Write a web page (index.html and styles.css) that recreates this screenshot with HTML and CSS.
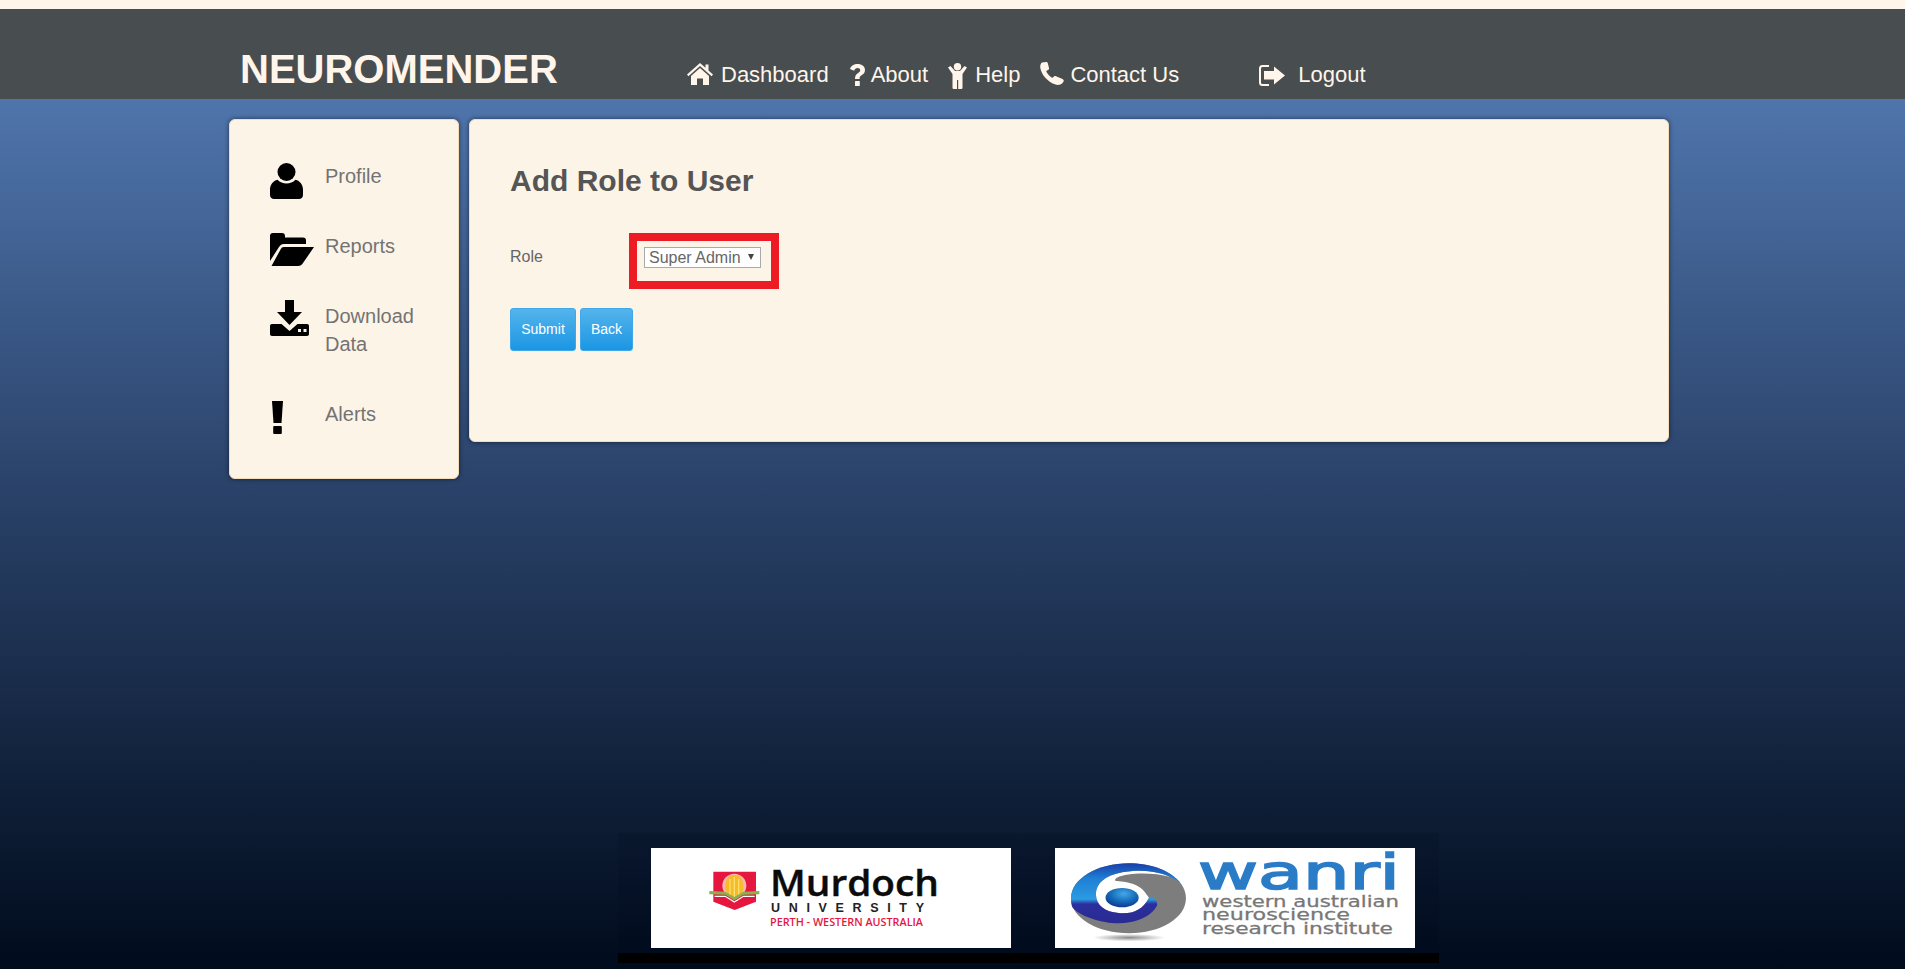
FILE: index.html
```html
<!DOCTYPE html>
<html lang="en">
<head>
<meta charset="utf-8">
<title>Neuromender</title>
<link rel="stylesheet" href="styles.css">
</head>
<body>
<header class="topbar">
  <h1 class="brand">NEUROMENDER</h1>
  <nav class="nav">
    <a class="nav-item nav-dashboard" href="#">
      <svg class="nav-icon icon-home" viewBox="0 0 26 22"><path d="M13 0 L18.500 4.800 V1.500 H21.500 V7.500 L26 11.500 L24.600 13.200 L13 3 L1.400 13.200 L0 11.500 Z"/><path d="M13 5 L22 13 V22 H16 V15.500 H10 V22 H4 V13 Z"/></svg>Dashboard</a>
    <a class="nav-item nav-about" href="#">
      <svg class="nav-icon icon-question" viewBox="0 0 15 22"><path d="M0 5 C1 1.500 4 0 7.500 0 C12 0 15 2.400 15 6 C15 9 13.200 10.300 11.200 11.600 C9.800 12.500 9.600 13.200 9.600 15 H5 C5 12 5.800 10.600 7.800 9.200 C9.300 8.200 10.200 7.500 10.200 6.200 C10.200 4.800 9.100 3.900 7.500 3.900 C5.800 3.900 4.700 4.900 4.100 6.800 Z"/><rect x="5" y="17" width="4.800" height="5" rx=".6"/></svg>About</a>
    <a class="nav-item nav-help" href="#">
      <svg class="nav-icon icon-person" viewBox="0 0 19 26"><circle cx="9.500" cy="3.700" r="3.700"/><path d="M0 4.500 L2.500 3 L7 8 H12 L16.500 3 L19 4.500 L14.500 11 V25 Q14.500 26 13.200 26 H10.200 V17 H9 V26 H5.800 Q4.500 26 4.500 25 V11 Z"/></svg>Help</a>
    <a class="nav-item nav-contact" href="#">
      <svg class="nav-icon icon-phone" viewBox="0 0 24 23"><path d="M2 .5 L6 0 C7 0 7.500 .5 7.800 1.200 L9 6 C9.200 7 8.800 7.600 8 8 L6.200 9 C7 11.500 10 15 12.600 15.800 L14 14.600 C14.600 14 15.400 14 16 14.300 L22.500 17 C23.500 17.500 24 18.300 23.600 19.400 L22.500 21 C20.500 23 18 23.400 15.500 22.600 C8 20 1.500 13 .3 6 C0 4 .5 1.500 2 .5 Z"/></svg>Contact Us</a>
    <a class="nav-item nav-logout" href="#">
      <svg class="nav-icon icon-logout" viewBox="0 0 26 21"><path class="bracket" d="M10 1 H3.500 C2 1 1 2 1 3.500 V17.500 C1 19 2 20 3.500 20 H10"/><path d="M5 6 H15 V1.500 L26 10.500 L15 19.500 V14.500 H5 Z"/></svg>Logout</a>
  </nav>
</header>

<div class="content">
  <aside class="sidebar card">
    <a class="side-item side-profile" href="#">
      <span class="side-icon"><svg class="icon-user" viewBox="0 0 33 36"><circle cx="16.500" cy="9" r="9"/><path d="M7.500 16.800 C10 19.600 13 20.400 16.500 20.400 C20 20.400 23 19.600 25.500 16.800 C30 18 33 21.800 33 27 V32 C33 34.600 31 36 29 36 H4 C2 36 0 34.600 0 32 V27 C0 21.800 3 18 7.500 16.800 Z"/></svg></span>
      <span class="side-label">Profile</span>
    </a>
    <a class="side-item side-reports" href="#">
      <span class="side-icon"><svg class="icon-folder" viewBox="0 0 44 33"><path d="M0 3 C0 1 1 0 3 0 H12 C14 0 15 1.200 15 3 V4.500 H33 C35 4.500 36 5.500 36 7.500 V11 H14 C11.500 11 10.400 12 9 14 L0 28 Z"/><path d="M14 14 H44 L33 30 C31.800 32 30.400 33 28 33 H1.500 L10 17.500 C11.200 15 12 14 14 14 Z"/></svg></span>
      <span class="side-label">Reports</span>
    </a>
    <a class="side-item side-download" href="#">
      <span class="side-icon"><svg class="icon-download" viewBox="0 0 39 36"><path d="M15 0 H24 V12 H32 L19.500 25 L7 12 H15 Z"/><path fill-rule="evenodd" d="M2 24 H11.500 L19.500 31 L27.500 24 H37 C38.200 24 39 24.800 39 26 V34 C39 35.200 38.200 36 37 36 H2 C.8 36 0 35.200 0 34 V26 C0 24.800 .8 24 2 24 Z M28 29 V32 H31 V29 Z M33.500 29 V32 H36.500 V29 Z"/></svg></span>
      <span class="side-label">Download<br>Data</span>
    </a>
    <a class="side-item side-alerts" href="#">
      <span class="side-icon"><svg class="icon-alert" viewBox="0 0 11 33"><path d="M0 0 H11 L9.500 22 H1.500 Z"/><rect x="1.200" y="25" width="8.600" height="8" rx="1"/></svg></span>
      <span class="side-label">Alerts</span>
    </a>
  </aside>

  <main class="panel card">
    <h2 class="title">Add Role to User</h2>
    <form class="form">
      <div class="form-row">
        <label class="form-label" for="role">Role</label>
        <div class="highlight">
          <div class="select-wrap">
            <select class="select" id="role">
              <option>Super Admin</option>
            </select>
          </div>
        </div>
      </div>
      <div class="actions">
        <button class="btn btn-submit" type="button">Submit</button>
        <button class="btn btn-back" type="button">Back</button>
      </div>
    </form>
  </main>
</div>

<footer class="footer">
  <div class="logos">
    <svg class="logo" viewBox="0 0 360 100">
      <g transform="translate(55 17) scale(.3333)">
        <path fill="#e5173f" d="M22 20 H150 V110 L86 135 L22 110 Z"/>
        <circle cx="85" cy="62" r="36" fill="#f8b8b0"/>
        <path fill="#f6bb26" d="M58 65 C58 40 70 30 85 30 C100 30 112 40 112 65 C112 85 100 98 85 104 C70 98 58 85 58 65 Z"/>
        <path fill="#ffdf70" d="M70 42 H74 V90 H70 Z M83 36 H87 V98 H83 Z M96 42 H100 V90 H96 Z"/>
        <path fill="#8db04c" d="M10 78 L58 80 L85 96 L112 80 L160 78 V88 L112 89 L85 106 L58 89 L10 88 Z"/>
        <path fill="#fff" d="M26 92 L58 92 L85 109 L112 92 L146 92 V96 L112 96 L85 113 L58 96 L26 96 Z"/>
      </g>
      <text class="mu-name" x="119" y="48" textLength="169" lengthAdjust="spacingAndGlyphs">Murdoch</text>
      <text class="mu-uni" x="120" y="64" textLength="153">UNIVERSITY</text>
      <text class="mu-place" x="119" y="78" textLength="153" lengthAdjust="spacingAndGlyphs">PERTH - WESTERN AUSTRALIA</text>
    </svg>
    <svg class="logo" viewBox="0 0 360 100">
      <defs>
        <radialGradient id="ball" cx="55%" cy="30%" r="70%"><stop offset="0" stop-color="#45a8e6"/><stop offset=".6" stop-color="#1268b8"/><stop offset="1" stop-color="#103a8c"/></radialGradient>
        <radialGradient id="shade" cx="50%" cy="50%" r="50%"><stop offset="0" stop-color="#8a8a8a"/><stop offset="1" stop-color="#fff"/></radialGradient>
        <linearGradient id="swirl" x1="0" y1="0" x2="0" y2="1"><stop offset="0" stop-color="#1a3fa8"/><stop offset=".25" stop-color="#1f7fd4"/><stop offset=".6" stop-color="#2a9be2"/><stop offset=".68" stop-color="#2b2e9e"/><stop offset="1" stop-color="#2a2a90"/></linearGradient>
      </defs>
      <g transform="translate(5 7) scale(.345 .3333)">
        <ellipse cx="200" cy="248" rx="105" ry="11" fill="url(#shade)"/>
        <path fill="#7d7d7d" d="M32 130 C32 70 110 25 200 25 C290 25 365 70 365 130 C365 190 290 235 200 235 C110 235 32 190 32 130 Z"/>
        <path fill="#fff" d="M104 118 C104 85 130 62 180 52 C225 44 275 46 320 66 C270 52 200 52 165 68 C158 72 158 78 165 78 C200 80 230 90 245 110 L258 128 C240 165 210 178 170 174 C130 172 104 150 104 118 Z"/>
        <path fill="url(#swirl)" d="M32 130 C32 70 110 25 200 25 C260 25 320 45 350 85 C310 50 240 40 180 52 C130 62 104 85 104 118 C104 150 130 172 170 174 C210 178 240 165 258 128 C270 122 282 135 282 150 C262 194 200 208 150 204 C100 198 50 178 35 155 C32 145 32 138 32 130 Z"/>
        <ellipse cx="180" cy="128" rx="48" ry="29" fill="url(#ball)"/>
      </g>
      <text class="wa-name" x="143" y="41" textLength="202" lengthAdjust="spacingAndGlyphs">wanri</text>
      <text class="wa-line" x="147" y="59" textLength="197" lengthAdjust="spacingAndGlyphs">western australian</text>
      <text class="wa-line" x="147" y="72" textLength="148" lengthAdjust="spacingAndGlyphs">neuroscience</text>
      <text class="wa-line" x="147" y="86" textLength="191" lengthAdjust="spacingAndGlyphs">research institute</text>
    </svg>
  </div>
  <div class="footer-bar"></div>
</footer>
</body>
</html>
```
FILE: styles.css
```css
* { box-sizing: border-box; }

html, body { margin: 0; padding: 0; }

body {
  min-height: 969px;
  height: 969px;
  overflow: hidden;
  display: flex;
  flex-direction: column;
  font-family: "Liberation Sans", Arial, sans-serif;
  color: #555;
  background: #fff5ea;
  padding-top: 9px;
  position: relative;
}

.topbar {
  flex: none;
  height: 90px;
  background: #484d50;
  display: flex;
  align-items: flex-start;
  padding-left: 240px;
  color: #fff5ea;
}

.brand {
  margin: 37px 0 0;
  font-size: 40px;
  line-height: 46px;
  font-weight: 700;
  width: 447px;
}

.nav {
  display: flex;
  align-items: flex-start;
  margin-top: 53px;
}

.nav-item {
  display: flex;
  align-items: flex-start;
  color: #fff5ea;
  text-decoration: none;
  font-size: 22px;
  line-height: 25px;
  white-space: nowrap;
}

.nav-icon { display: block; fill: #fff5ea; flex: none; }

.icon-home { width: 26px; height: 22px; margin: 1px 8px 0 0; }
.icon-question { width: 15px; height: 22px; margin: 2px 6px 0 0; }
.icon-person { width: 19px; height: 26px; margin: 1px 8px 0 0; }
.icon-phone { width: 24px; height: 23px; margin: 0 6px 0 0; }
.icon-logout { width: 26px; height: 21px; margin: 3px 13px 0 0; }
.icon-logout .bracket { fill: none; stroke: #fff5ea; stroke-width: 2; }

.nav-about { margin-left: 21px; }
.nav-help { margin-left: 20px; }
.nav-contact { margin-left: 20px; }
.nav-logout { margin-left: 80px; }

.content {
  flex: 1;
  display: flex;
  align-items: flex-start;
  gap: 10px;
  padding: 20px 0 0 229px;
  background: linear-gradient(#4f75ac 0, #2a4269 45%, #000b1c 100%);
}

.card {
  background: #fdf4e8;
  border: 1px solid #f5dcb8;
  border-radius: 6px;
  box-shadow: 0 0 5px rgba(0, 0, 0, .55);
}

.sidebar {
  width: 230px;
  height: 360px;
  flex: none;
  padding: 42px 0 0 40px;
  display: flex;
  flex-direction: column;
}

.side-item {
  display: flex;
  align-items: flex-start;
  color: #737373;
  text-decoration: none;
  font-size: 20px;
  line-height: 28px;
}

.side-icon { width: 55px; flex: none; display: block; }
.side-icon svg { display: block; fill: #000; }

.side-reports { margin-top: 42px; }
.side-download { margin-top: 42px; }
.side-alerts { margin-top: 42px; }

.side-profile { height: 28px; }
.side-reports { height: 28px; }
.side-download { height: 56px; }
.side-alerts { height: 28px; }

.icon-user { width: 33px; height: 36px; margin-top: 1px; }
.icon-folder { width: 44px; height: 33px; margin-top: 1px; }
.icon-download { width: 39px; height: 36px; margin-top: -2px; }
.icon-alert { width: 11px; height: 33px; margin: 1px 0 0 2px; }

.panel {
  width: 1200px;
  height: 323px;
  flex: none;
  padding: 44px 0 0 40px;
}

.title {
  margin: 0;
  font-size: 30px;
  line-height: 34px;
  font-weight: 700;
  color: #555;
}

.form { display: flex; flex-direction: column; margin-top: 35px; }

.form-row { display: flex; align-items: flex-start; }

.form-label {
  width: 119px;
  font-size: 16px;
  line-height: 18px;
  margin-top: 15px;
  color: #666;
}

.highlight {
  width: 150px;
  height: 56px;
  border: 8px solid #ed1c24;
  padding: 6px 0 0 7px;
}

.select-wrap {
  position: relative;
  width: 117px;
  height: 21px;
}

.select-wrap::after {
  content: "";
  position: absolute;
  top: 7px;
  right: 7px;
  border-left: 3px solid transparent;
  border-right: 3px solid transparent;
  border-top: 6px solid #444;
  pointer-events: none;
}

.select {
  display: block;
  width: 117px;
  height: 21px;
  appearance: none;
  background: #fff;
  border: 1px solid #aaa;
  border-radius: 0;
  padding: 0 0 0 4px;
  font-family: "Liberation Sans", Arial, sans-serif;
  font-size: 16px;
  color: #666;
}

.actions { display: flex; gap: 4px; margin-top: 19px; }

.btn {
  height: 43px;
  padding: 0 0 2px;
  border: 1px solid #3ea8ea;
  border-radius: 3px;
  background: linear-gradient(#54b4ec, #1b96e4);
  color: #fff;
  font-family: "Liberation Sans", Arial, sans-serif;
  font-size: 14px;
}

.btn-submit { width: 66px; }
.btn-back { width: 53px; }

.footer {
  position: absolute;
  left: 618px;
  bottom: 6px;
  width: 821px;
  height: 130px;
  background: rgba(0, 8, 25, .15);
  display: flex;
  flex-direction: column;
}

.logos {
  display: flex;
  gap: 44px;
  padding: 15px 0 0 33px;
  height: 120px;
}

.logo { display: block; width: 360px; height: 100px; background: #fff; flex: none; overflow: visible; }

.footer-bar { height: 10px; background: #000; }

.mu-name { font-family: "Open Sans", "Liberation Sans", sans-serif; font-size: 36px; font-weight: 600; fill: #0b0b0b; stroke: #0b0b0b; stroke-width: .4px; }
.mu-uni { font-family: "Liberation Sans", sans-serif; font-size: 12.500px; font-weight: 700; fill: #222; }
.mu-place { font-family: "Open Sans", "Liberation Sans", sans-serif; font-size: 10px; font-weight: 600; fill: #e5173f; }
.wa-name { font-family: "DejaVu Sans", sans-serif; font-size: 48px; fill: #2a7cc7; stroke: #2a7cc7; stroke-width: 1.600px; }
.wa-line { font-family: "DejaVu Sans", sans-serif; font-size: 16.500px; fill: #777; stroke: #777; stroke-width: .3px; }
```
